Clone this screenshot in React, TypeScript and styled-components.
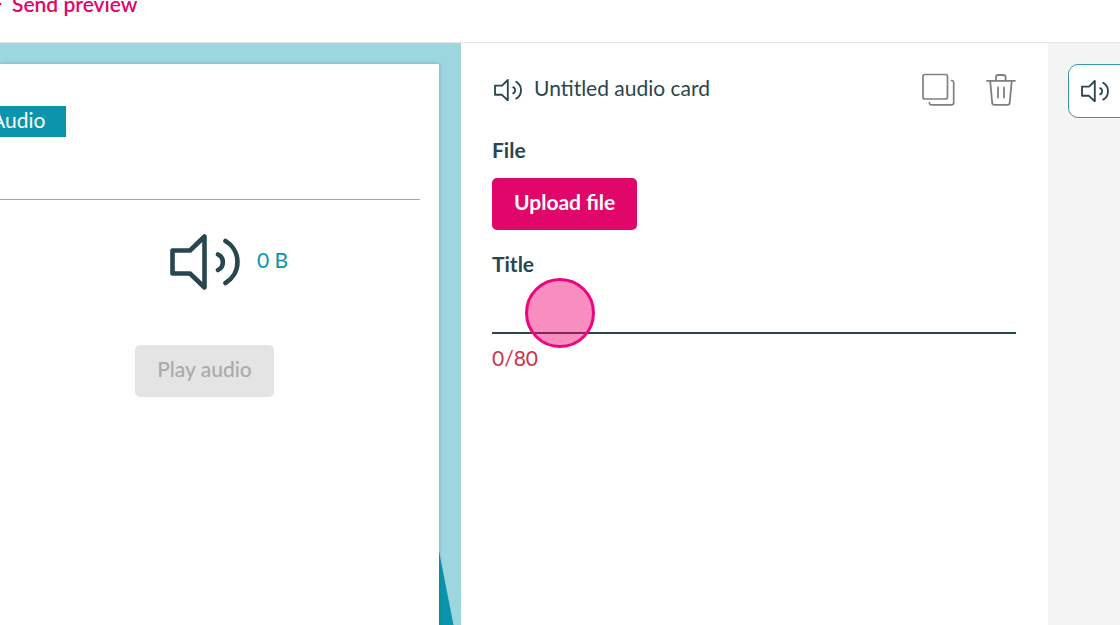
import React from "react";
import styled, { createGlobalStyle } from "styled-components";

const ink = "#29464f";
const teal = "#0a95ac";
const pink = "#e0066a";

const GlobalStyle = createGlobalStyle`
  *, *::before, *::after { box-sizing: border-box; }
  body {
    margin: 0;
    background: #fff;
    color: ${ink};
    font-family: Lato, "Open Sans", sans-serif;
    font-size: 21px;
    line-height: 28px;
  }
  button, input { font: inherit; color: inherit; }
`;

const Page = styled.div`
  display: flex;
  flex-direction: column;
  height: 100vh;
  overflow: hidden;
`;

const Header = styled.header`
  display: flex;
  flex: none;
  align-items: flex-end;
  height: 43px;
  padding-bottom: 24px;
  border-bottom: 1px solid #e4e4e4;
  overflow: hidden;
`;

const LinkButton = styled.button`
  display: flex;
  align-items: center;
  gap: 10px;
  margin-left: -14px;
  padding: 0;
  border: 0;
  background: none;
  color: ${pink};
  font-weight: 600;
`;

const Workspace = styled.main`
  display: grid;
  grid-template-columns: 461px 1fr 72px;
  flex: 1;
  min-height: 0;
`;

const Preview = styled.section`
  position: relative;
  display: flex;
  padding: 21px 22px 0 0;
  background: #9cd6de;
  overflow: hidden;
`;

const Wedge = styled.svg`
  position: absolute;
  right: 0;
  bottom: 0;
`;

const Paper = styled.article`
  position: relative;
  flex: 1;
  padding: 42px 19px 0 0;
  background: #fff;
  box-shadow: 0 0 4px rgba(20, 80, 90, 0.3);
`;

const PaperBody = styled.div`
  display: flex;
  flex-direction: column;
  align-items: center;
  margin-left: -11px;
`;

const Tag = styled.span`
  align-self: flex-start;
  margin-left: -19px;
  padding: 0 21px 4px;
  background: ${teal};
  color: #fff;
  line-height: 27px;
`;

const Rule = styled.hr`
  width: 100%;
  margin: 62px 0 34px;
  border: 0;
  border-top: 1px solid #a3a5a6;
`;

const AudioInfo = styled.div`
  display: flex;
  gap: 17px;
  padding-left: 49px;
  color: ${teal};
`;

const FileSize = styled.span`
  padding-top: 12px;
`;

const Button = styled.button<{ $primary?: boolean }>`
  height: 52px;
  padding: 0 22px 4px;
  border: 0;
  border-radius: 5px;
  background: ${(p) => (p.$primary ? pink : "#e4e4e4")};
  color: ${(p) => (p.$primary ? "#fff" : "#aaa")};
  font-weight: ${(p) => (p.$primary ? 700 : 500)};
`;

const PlayButton = styled(Button)`
  margin-top: 55px;
`;

const Editor = styled.section`
  display: flex;
  flex-direction: column;
  align-items: flex-start;
  padding: 30px 32px 0 31px;
`;

const EditorHeader = styled.div`
  display: flex;
  width: 100%;
  align-items: center;
  margin-bottom: 29px;
  padding-left: 2px;
`;

const CardName = styled.h1`
  flex: 1;
  margin: 0;
  padding: 0 0 4px 12px;
  font-size: 21px;
  font-weight: 400;
`;

const IconButton = styled.button`
  display: flex;
  margin-left: 29px;
  padding: 0;
  border: 0;
  background: none;
  color: #808080;
`;

const Label = styled.label`
  margin-bottom: 14px;
  font-weight: 700;
`;

const TitleLabel = styled(Label)`
  margin: 20px 0 0;
`;

const InputWrap = styled.div`
  position: relative;
  width: 100%;
`;

const TitleInput = styled.input`
  display: block;
  width: 100%;
  height: 56px;
  padding: 0;
  border: 0;
  border-bottom: 2px solid ${ink};
  background: none;
  outline: none;
`;

const Pointer = styled.span`
  position: absolute;
  top: 0;
  left: 33px;
  width: 70px;
  height: 70px;
  border: 3px solid #f0037f;
  border-radius: 50%;
  background: rgba(240, 3, 112, 0.45);
  pointer-events: none;
`;

const Counter = styled.output`
  margin-top: 10px;
  color: #cc3352;
`;

const Cards = styled.aside`
  padding: 21px 0 0 20px;
  background: #f4f4f4;
  overflow: hidden;
`;

const CardTab = styled.button`
  display: flex;
  align-items: center;
  width: 100px;
  height: 54px;
  padding: 0 12px;
  border: 1px solid #3599aa;
  border-radius: 10px;
  background: #fff;
`;

const SpeakerIcon = ({ width }: { width: number }) => (
  <svg
    width={width}
    height={width * 0.8}
    viewBox="0 0 70 56"
    fill="none"
    stroke={ink}
    strokeWidth="4.6"
    strokeLinecap="round"
    strokeLinejoin="round"
    aria-hidden="true"
  >
    <path d="M2.5 16.500H20L34.500 2.500V53.500L20 39.500H2.500Z" />
    <path d="M48 20.500a8.600 8.600 0 0 1 0 15.500" />
    <path d="M55.500 7a24.400 24.400 0 0 1 0 42" />
  </svg>
);

const CopyIcon = () => (
  <svg width="34" height="34" viewBox="0 0 34 34" fill="none" stroke="currentColor" strokeWidth="1.7" strokeLinecap="round" aria-hidden="true">
    <rect x="2" y="1.500" width="24.500" height="24.500" rx="2" />
    <path d="M30.500 7.500c1.500 0 2.200.7 2.200 2.200V29.500c0 1.600-.8 2.400-2.400 2.400H10.500C9 31.900 8.400 31 8.400 29.700" />
  </svg>
);

const TrashIcon = () => (
  <svg width="32" height="34" viewBox="0 0 32 34" fill="none" stroke="currentColor" strokeWidth="1.8" strokeLinecap="round" strokeLinejoin="round" aria-hidden="true">
    <path d="M3 7.800H31M12 7.300V4.200C12 2.800 12.800 2 14.100 2H19.500C20.800 2 21.600 2.800 21.600 4.200V7.300" />
    <path d="M6.200 8.200L8.200 29.900C8.300 31.300 9 31.800 10.200 31.800H23.600C24.800 31.800 25.600 31.300 25.700 29.900L27.700 8.200" />
    <path d="M14 14.500V24.500M20 14.500V24.500" />
  </svg>
);

export default function App() {
  return (
    <>
      <GlobalStyle />
      <Page>
        <Header>
          <LinkButton type="button">
            <svg width="16" height="16" viewBox="0 0 16 16" fill="currentColor" aria-hidden="true">
              <path d="M0 1L14 6.500Q17 8 14 9.500L0 15L3 8Z" />
            </svg>
            Send preview
          </LinkButton>
        </Header>
        <Workspace>
          <Preview aria-label="Preview">
            <Wedge width="22" height="74" viewBox="0 0 22 74" aria-hidden="true">
              <path d="M0 0L14.500 74H0Z" fill={teal} />
            </Wedge>
            <Paper>
              <PaperBody>
                <Tag>Audio</Tag>
                <Rule />
                <AudioInfo>
                  <SpeakerIcon width={70} />
                  <FileSize>0 B</FileSize>
                </AudioInfo>
                <PlayButton type="button" disabled>
                  Play audio
                </PlayButton>
              </PaperBody>
            </Paper>
          </Preview>
          <Editor>
            <EditorHeader>
              <SpeakerIcon width={28} />
              <CardName>Untitled audio card</CardName>
              <IconButton type="button" aria-label="Duplicate card">
                <CopyIcon />
              </IconButton>
              <IconButton type="button" aria-label="Delete card">
                <TrashIcon />
              </IconButton>
            </EditorHeader>
            <Label htmlFor="upload">File</Label>
            <Button id="upload" type="button" $primary>
              Upload file
            </Button>
            <TitleLabel htmlFor="title">Title</TitleLabel>
            <InputWrap>
              <TitleInput id="title" type="text" maxLength={80} />
              <Pointer />
            </InputWrap>
            <Counter htmlFor="title">0/80</Counter>
          </Editor>
          <Cards>
            <CardTab type="button" aria-label="Audio card">
              <SpeakerIcon width={28} />
            </CardTab>
          </Cards>
        </Workspace>
      </Page>
    </>
  );
}
